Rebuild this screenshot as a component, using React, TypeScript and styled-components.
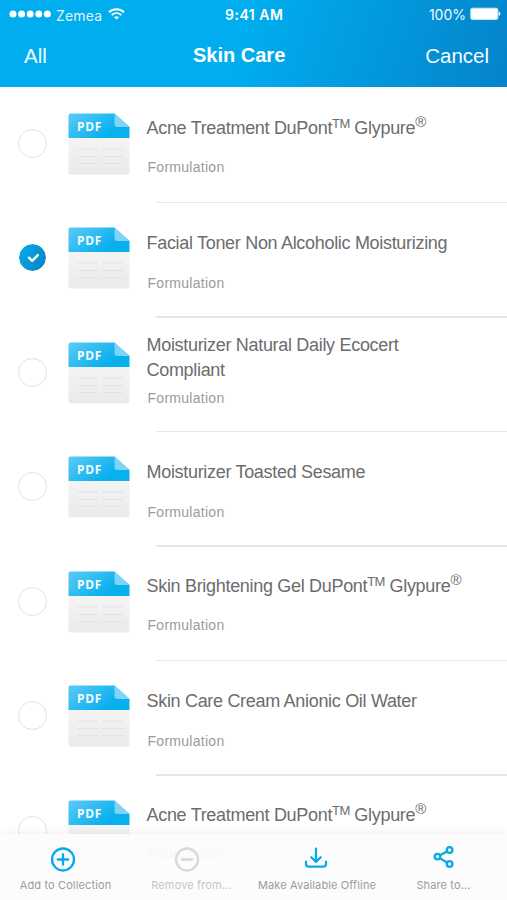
import React, { useId } from "react";
import styled, { createGlobalStyle } from "styled-components";

const GlobalStyle = createGlobalStyle`
  * { box-sizing: border-box; }
  html, body { margin: 0; background: #fff; }
  body { font-family: "Liberation Sans", Arial, sans-serif; overflow: hidden; }
`;

const Screen = styled.main`
  position: relative;
  width: 507px;
  height: 900px;
  overflow: hidden;
  background: #fff;
`;

const Header = styled.header`
  height: 87px;
  color: #fff;
  background: linear-gradient(107deg, #00adee 0%, #00adee 48%, #0583cb 100%);
`;

const StatusBar = styled.div`
  display: grid;
  grid-template-columns: 216px auto 1fr;
  align-items: center;
  height: 28px;
  padding: 0 6px 0 9px;
  font-family: Inter, sans-serif;
  font-size: 14px;
`;

const StatusGroup = styled.div<{ $end?: boolean }>`
  display: flex;
  align-items: center;
  justify-content: ${(p) => (p.$end ? "flex-end" : "flex-start")};
`;

const Carrier = styled.span`
  margin: 2px 6px 0 5px;
  letter-spacing: 0.15px;
  opacity: 0.88;
`;

const Clock = styled.span`
  font-weight: 600;
  letter-spacing: 0.5px;
`;

const BatteryLevel = styled.span`
  margin-right: 4px;
  letter-spacing: 0;
  opacity: 0.95;
`;

const NavBar = styled.nav`
  display: grid;
  grid-template-columns: 169px auto 1fr;
  align-items: center;
  height: 56px;
  padding: 0 18px 0 24px;
`;

const NavButton = styled.button<{ $end?: boolean }>`
  justify-self: ${(p) => (p.$end ? "end" : "start")};
  padding: 0;
  border: 0;
  background: none;
  color: #f4fcff;
  font: 20.5px/24px "Liberation Sans", Arial, sans-serif;
`;

const Title = styled.h1`
  margin: 0 0 3px;
  font-size: 20px;
  line-height: 24px;
  font-weight: 700;
`;

const List = styled.ul`
  margin: 0;
  padding: 0.5px 0 0;
  list-style: none;
`;

const Row = styled.li`
  display: grid;
  grid-template-columns: 49.5px 79px 1fr;
  height: 114.5px;
  padding-left: 18px;
`;

const Toggle = styled.span<{ $checked?: boolean }>`
  display: grid;
  place-items: center;
  width: 29px;
  height: 29px;
  margin-top: 41px;
  border-radius: 50%;
  border: ${(p) => (p.$checked ? "1px solid #fff" : "1.5px solid #e1e1e3")};
  background: ${(p) => (p.$checked ? "linear-gradient(120deg, #08aeea, #087fc6)" : "#fff")};
  background-clip: padding-box;
`;

const Thumb = styled.div`
  padding-top: 25px;
  svg { display: block; }
`;

const Details = styled.div`
  display: flex;
  flex-direction: column;
  &::after {
    content: "";
    height: 1.5px;
    margin: auto 0 -1px 9.5px;
    background: #e6e6e7;
  }
`;

const NameBox = styled.div<{ $double?: boolean }>`
  display: flex;
  align-items: center;
  height: ${(p) => (p.$double ? "50px" : "24px")};
  margin-top: ${(p) => (p.$double ? "16px" : "29px")};
`;

const Name = styled.h2`
  margin: 0;
  color: #6c6c6d;
  font-size: 18px;
  font-weight: 400;
  line-height: 24.5px;
  letter-spacing: -0.31px;
  white-space: pre-line;
`;

const Mark = styled.sup<{ $registered?: boolean }>`
  position: relative;
  top: ${(p) => (p.$registered ? "-7px" : "-6px")};
  font-size: ${(p) => (p.$registered ? "15px" : "13px")};
  line-height: 0;
  letter-spacing: -0.6px;
  vertical-align: baseline;
`;

const Kind = styled.p<{ $double?: boolean; $raised?: boolean }>`
  margin: ${(p) => (p.$double ? "6px" : p.$raised ? "17.5px" : "19px")} 0 0 1px;
  color: #9b9b9d;
  font-size: 14px;
  line-height: 18px;
  letter-spacing: 0.28px;
`;

const ActionBar = styled.footer`
  position: absolute;
  left: 0;
  right: 0;
  bottom: 0;
  display: grid;
  grid-template-columns: 131px 121px 130px 123px;
  height: 66px;
  background: rgba(252, 252, 253, 0.94);
  box-shadow: 0 -1px 8px rgba(0, 0, 0, 0.07);
`;

const Action = styled.button<{ $muted?: boolean; $shift: number }>`
  display: flex;
  flex-direction: column;
  align-items: center;
  min-width: 0;
  padding: 10px 0 0;
  border: 0;
  background: none;
  color: ${(p) => (p.$muted ? "#d8d8da" : "#08a9e8")};
  svg {
    display: block;
    flex: none;
    margin-right: ${(p) => p.$shift}px;
  }
`;

const ActionLabel = styled.span<{ $muted?: boolean }>`
  margin-top: 3.5px;
  color: ${(p) => (p.$muted ? "#c5c5c9" : "#9b9ba2")};
  font: 11px/15px Inter, sans-serif;
  letter-spacing: 0.13px;
  white-space: nowrap;
`;

function Signal() {
  return (
    <svg width="42" height="8" viewBox="0 0 42 8" fill="#fff">
      {[4, 12.6, 21.2, 29.8, 38.4].map((x) => <circle key={x} cx={x} cy="4" r="3.5" />)}
    </svg>
  );
}

function Wifi() {
  return (
    <svg width="17" height="12" viewBox="0 0 17 12" fill="none" stroke="#fff" strokeWidth="1.9">
      <path d="M1 4.2C5.2.2 11.8.2 16 4.2M3.7 7.1c2.8-2.6 6.8-2.6 9.6 0" />
      <path d="M8.5 11.6 6 9.2q2.5-1.9 5 0Z" fill="#fff" stroke="none" />
    </svg>
  );
}

function Battery() {
  return (
    <svg width="31" height="14" viewBox="0 0 31 14">
      <rect x=".8" y="1.2" width="27" height="11.2" rx="1.5" fill="#fff" stroke="#c8e9fa" />
      <path d="M28.7 4.3q3.4 2.5 0 5Z" fill="#fff" />
    </svg>
  );
}

function PdfIcon() {
  const id = useId();
  return (
    <svg width="62" height="63" viewBox="0 0 62 63">
      <defs>
        <linearGradient id={`${id}-top`} x1="0" y1="0" x2="1" y2=".55">
          <stop stopColor="#5ccaf5" />
          <stop offset=".85" stopColor="#08b0ee" />
        </linearGradient>
        <linearGradient id={`${id}-paper`} x1="0" y1="0" x2="0" y2="1">
          <stop stopColor="#f4f4f5" />
          <stop offset="1" stopColor="#e9eaeb" />
        </linearGradient>
      </defs>
      <path d="M.5 25h61v34.5q0 2-2 2h-57q-2 0-2-2Z" fill={`url(#${id}-paper)`} />
      <path d="M.5 25V2.5q0-2 2-2h44l15 13.5v11Z" fill={`url(#${id}-top)`} />
      <path d="m46.5.5 15 13.5h-12q-3 0-3-3Z" fill="#7fd3f6" />
      <path d="M10 36h20M35 36h20M10 43.5h20M35 43.5h20M10 50.5h20M35 50.5h20" stroke="#e1e2e3" strokeWidth="1.2" />
      <text x="9" y="18" fill="#f5fcff" fontFamily="Open Sans, sans-serif" fontSize="12" fontWeight="700" letterSpacing=".7">PDF</text>
    </svg>
  );
}

function Check() {
  return (
    <svg width="14" height="11" viewBox="0 0 14 11" fill="none" stroke="#fff" strokeWidth="2.4" strokeLinecap="round" strokeLinejoin="round">
      <path d="m3 5.7 3.1 3.1 5.7-5.7" />
    </svg>
  );
}

function CircleIcon({ plus }: { plus?: boolean }) {
  return (
    <svg width="30" height="30" viewBox="0 0 30 30" fill="none" stroke="currentColor" strokeWidth="2.3" strokeLinecap="round">
      <circle cx="15" cy="15.5" r="11" />
      <path d={plus ? "M9.8 15.5h10.4M15 10.3v10.4" : "M9.8 15.5h10.4"} />
    </svg>
  );
}

function DownloadIcon() {
  return (
    <svg width="30" height="30" viewBox="0 0 30 30" fill="none" stroke="currentColor" strokeWidth="2.2" strokeLinecap="round" strokeLinejoin="round">
      <path d="M15 4.5v13M10.3 13.2l4.7 4.7 4.7-4.7M5 17.5V20q0 2.7 2.7 2.7h14.6q2.7 0 2.7-2.7v-2.5" />
    </svg>
  );
}

function ShareIcon() {
  return (
    <svg width="30" height="30" viewBox="0 0 30 30" fill="none" stroke="currentColor" strokeWidth="2.3">
      <circle cx="8.5" cy="12.6" r="2.8" />
      <circle cx="20.6" cy="6" r="2.8" />
      <circle cx="20.6" cy="20" r="2.8" />
      <path d="m11 11.2 7-3.8m-7 6.7 7 4.4" />
    </svg>
  );
}

const trademark = <Mark>TM</Mark>;
const registered = <Mark $registered>®</Mark>;
const acne = <>Acne Treatment DuPont{trademark} Glypure{registered}</>;

interface Item {
  name: React.ReactNode;
  checked?: boolean;
  double?: boolean;
  raised?: boolean;
}

const items: Item[] = [
  { name: acne, raised: true },
  { name: "Facial Toner Non Alcoholic Moisturizing", checked: true },
  { name: "Moisturizer Natural Daily Ecocert\nCompliant", double: true },
  { name: "Moisturizer Toasted Sesame" },
  { name: <>Skin Brightening Gel DuPont{trademark} Glypure{registered}</>, raised: true },
  { name: "Skin Care Cream Anionic Oil Water" },
  { name: acne, raised: true },
];

export default function App() {
  return (
    <>
      <GlobalStyle />
      <Screen>
        <Header>
          <StatusBar>
            <StatusGroup><Signal /><Carrier>Zemea</Carrier><Wifi /></StatusGroup>
            <Clock>9:41 AM</Clock>
            <StatusGroup $end><BatteryLevel>100%</BatteryLevel><Battery /></StatusGroup>
          </StatusBar>
          <NavBar>
            <NavButton>All</NavButton>
            <Title>Skin Care</Title>
            <NavButton $end>Cancel</NavButton>
          </NavBar>
        </Header>
        <List>
          {items.map((item, index) => (
            <Row key={index}>
              <Toggle $checked={item.checked}>{item.checked && <Check />}</Toggle>
              <Thumb><PdfIcon /></Thumb>
              <Details>
                <NameBox $double={item.double}><Name>{item.name}</Name></NameBox>
                <Kind $double={item.double} $raised={item.raised}>Formulation</Kind>
              </Details>
            </Row>
          ))}
        </List>
        <ActionBar>
          <Action $shift={5}><CircleIcon plus /><ActionLabel>Add to Collection</ActionLabel></Action>
          <Action $shift={9} $muted><CircleIcon /><ActionLabel $muted>Remove from...</ActionLabel></Action>
          <Action $shift={3}><DownloadIcon /><ActionLabel>Make Available Offline</ActionLabel></Action>
          <Action $shift={0}><ShareIcon /><ActionLabel>Share to...</ActionLabel></Action>
        </ActionBar>
      </Screen>
    </>
  );
}
